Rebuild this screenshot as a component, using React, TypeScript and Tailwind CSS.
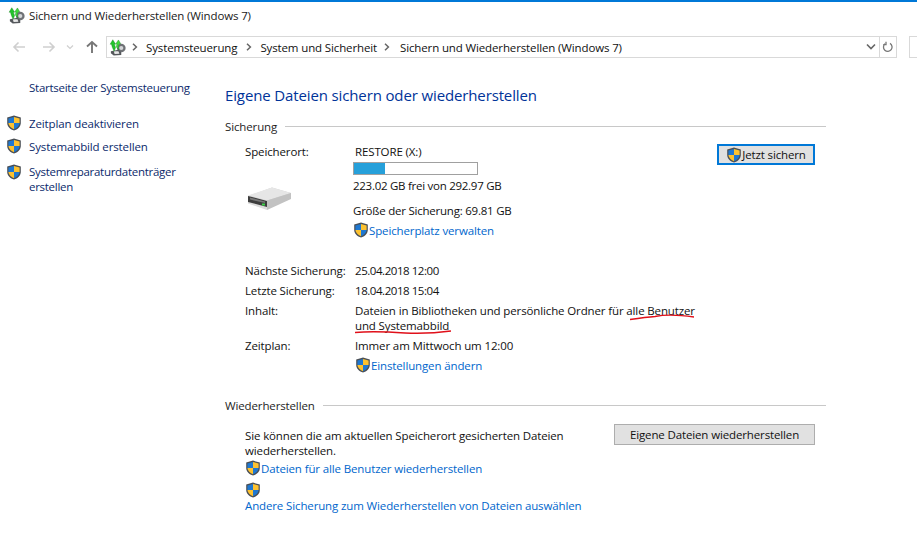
import React from "react";

const font = { fontFamily: '"Open Sans", "Noto Sans", sans-serif' };

function Shield({ className = "" }: { className?: string }) {
  return (
    <svg viewBox="0 0 16 16" className={`w-4 h-4 shrink-0 ${className}`}>
      <path d="M8 .6 L14.8 2.6 V8 C14.8 11.8 11.6 14.4 8 15.6 C4.4 14.4 1.2 11.8 1.2 8 V2.6 Z" fill="#4a4f55" />
      <path d="M8 2 V8 H2.4 V3.6 Z" fill="#1f78d1" />
      <path d="M8 2 L13.6 3.6 V8 H8 Z" fill="#fdc22f" />
      <path d="M2.4 8 H8 V14.2 C5.2 13.2 2.6 11 2.4 8 Z" fill="#fdc22f" />
      <path d="M8 8 H13.6 C13.4 11 10.8 13.2 8 14.2 Z" fill="#1f78d1" />
    </svg>
  );
}

function BackupIcon({ className = "" }: { className?: string }) {
  return (
    <svg viewBox="0 0 18 18" className={`w-[17px] h-[17px] shrink-0 ${className}`}>
      <circle cx="13" cy="9.5" r="4.6" fill="#6f7276" />
      <circle cx="13" cy="9.5" r="2.2" fill="#d4d6d8" />
      <path d="M2 13 L10 11.5 L13 14 L13 17 L5 17.5 L2 15 Z" fill="#55585c" />
      <path d="M5 13 L10 13 L11 15.5 L6 16 Z" fill="#e8e8e8" />
      <path d="M4 .8 L7 5.5 H5.6 L7 9 L5.4 13 L3.6 9 L2.6 5.5 H1.2 Z" fill="#22c52c" stroke="#0f7a18" strokeWidth=".4" />
      <path d="M10 1 L12.4 5 H11 L9.8 8 L10.4 11.5 L7.8 8.5 L8.4 5 H7.2 Z" fill="#3fdc3a" stroke="#0f7a18" strokeWidth=".4" />
    </svg>
  );
}

function Drive() {
  // schaal van de uitsnede: 1 eenheid = 1px
  return (
    <svg viewBox="0 0 44 24" className="w-[44px] h-[24px]">
      <path d="M0 9 L24 .5 L43 6 L43 11 L19 19 L0 13 Z" fill="#d0d0d0" />
      <path d="M0 8.5 L24 .5 L43 6 L19 13.5 Z" fill="#e6e6e6" />
      <path d="M19 13.5 L43 6 V12 L19 23 Z" fill="#c2c2c2" />
      <path d="M0 8.5 L19 13.5 V23 L0 16.5 Z" fill="#dcdcdc" />
      <path d="M0 9 L19 14 V20 L0 15 Z" fill="#3d3d3d" />
      <path d="M2 10.5 L17 14.5 V16 L2 12.5 Z" fill="#777" />
      <rect x="14" y="16.5" width="3" height="2" fill="#3fd24b" />
    </svg>
  );
}

function Sep({ className = "" }: { className?: string }) {
  return (
    <svg viewBox="0 0 6 8" className={`w-[6px] h-2 shrink-0 ${className}`}>
      <path d="M1 .8 L4.4 4 L1 7.2" fill="none" stroke="#666" strokeWidth="1.5" />
    </svg>
  );
}

function SectionTitle({ children }: { children: React.ReactNode }) {
  return (
    <div className="flex items-center gap-2 h-4">
      <span className="text-[#1e1e1e]">{children}</span>
      <div className="flex-1 h-px bg-[#c8c8c8]" />
    </div>
  );
}

function Row({ label, children }: { label: string; children: React.ReactNode }) {
  return (
    <div className="flex">
      <div className="w-[110px] shrink-0">{label}</div>
      <div className="flex-1">{children}</div>
    </div>
  );
}

function ShieldLink({ children }: { children: React.ReactNode }) {
  return (
    <div className="flex items-center h-[18px] text-[#0066cc]">
      <Shield />
      <span>{children}</span>
    </div>
  );
}

export default function App() {
  return (
    <div style={font} className="w-[917px] h-[546px] bg-white overflow-hidden text-[11.5px] leading-[15px] tracking-[-0.13px] text-[#111]">
      <div className="h-[2px] bg-[#0078d7]" />

      {/* titel */}
      <div className="flex items-center gap-[4px] h-[26px] pl-2 pt-[1px] text-[#1a1a1a]">
        <BackupIcon />
        <span>Sichern und Wiederherstellen (Windows 7)</span>
      </div>

      {/* adresbalk */}
      <div className="flex items-center h-[22px] mt-[8px]">
        <div className="flex items-center w-[106px] pl-[12px] shrink-0">
          <svg viewBox="0 0 14 14" className="w-[14px] h-[14px]"><path d="M13 7 H2 M6.5 2.5 L2 7 L6.5 11.5" fill="none" stroke="#cfcfcf" strokeWidth="1.6" /></svg>
          <svg viewBox="0 0 14 14" className="w-[14px] h-[14px] ml-[16px]"><path d="M1 7 H12 M7.5 2.5 L12 7 L7.5 11.5" fill="none" stroke="#cfcfcf" strokeWidth="1.6" /></svg>
          <svg viewBox="0 0 8 8" className="w-2 h-2 ml-[10px]"><path d="M1 2.5 L4 5.5 L7 2.5" fill="none" stroke="#cfcfcf" strokeWidth="1.2" /></svg>
          <svg viewBox="0 0 14 14" className="w-[14px] h-[14px] ml-[11px]"><path d="M7 13 V2 M2 6.5 L7 2 L12 6.5" fill="none" stroke="#777" strokeWidth="1.9" /></svg>
        </div>
        <div className="flex items-center w-[791px] h-[22px] border border-[#d9d9d9] shrink-0">
          <BackupIcon className="ml-[2px]" />
          <Sep className="ml-[6px]" />
          <span className="ml-[8px]">Systemsteuerung</span>
          <Sep className="ml-[9px]" />
          <span className="ml-[8px]">System und Sicherheit</span>
          <Sep className="ml-[7px]" />
          <span className="ml-[10px]">Sichern und Wiederherstellen (Windows 7)</span>
          <div className="flex-1" />
          <svg viewBox="0 0 10 8" className="w-[10px] h-2 mr-[3px]"><path d="M1 1.5 L5 5.5 L9 1.5" fill="none" stroke="#666" strokeWidth="1.6" /></svg>
          <div className="flex items-center justify-center w-[17px] h-full border-l border-[#d9d9d9]">
            <svg viewBox="0 0 12 12" className="w-3 h-3"><path d="M3 2.8 A4.3 4.3 0 1 0 8 2.4 M4 .8 V3.6 H1.2" fill="none" stroke="#777" strokeWidth="1.3" /></svg>
          </div>
        </div>
        <div className="w-2 h-[22px] ml-3 border-l border-y border-[#d9d9d9]" />
      </div>

      <div className="flex">
        {/* zijbalk */}
        <div className="w-[225px] shrink-0 pt-[22px] text-[#0b2a6b]">
          <div className="pl-[29px] tracking-[-0.26px]">Startseite der Systemsteuerung</div>
          <div className="flex flex-col mt-[20px] pl-[6px]">
            <div className="flex items-center gap-[7px]"><Shield /><span>Zeitplan deaktivieren</span></div>
            <div className="flex items-center gap-[7px] mt-[7px]"><Shield /><span>Systemabbild erstellen</span></div>
            <div className="flex items-start gap-[7px] mt-[10px]"><Shield /><span className="tracking-[-0.28px]">Systemreparaturdatenträger<br />erstellen</span></div>
          </div>
        </div>

        {/* inhoud */}
        <div className="w-[601px] shrink-0 pt-[27px]">
          <h1 className="text-[15px] leading-[20px] text-[#003399]">Eigene Dateien sichern oder wiederherstellen</h1>
          <div className="mt-[13px]"><SectionTitle>Sicherung</SectionTitle></div>

          <div className="relative pl-[20px] mt-[10px]">
            <div className="flex">
              <div className="w-[108px] shrink-0">
                <div>Speicherort:</div>
                <div className="mt-[28px] ml-[3px]"><Drive /></div>
              </div>
              <div className="flex-1">
                <div className="pl-[2px]">RESTORE (X:)</div>
                <div className="w-[125px] h-[13px] border border-[#a0a0a0] mt-[3px]">
                  <div className="w-[31px] h-full bg-[#26a0da]" />
                </div>
                <div className="mt-[3px] tracking-[-0.27px]">223.02 GB frei von 292.97 GB</div>
                <div className="mt-[10px] tracking-[-0.23px]">Größe der Sicherung: 69.81 GB</div>
                <div className="mt-[3px]"><ShieldLink>Speicherplatz verwalten</ShieldLink></div>
              </div>
              <button className="flex items-center justify-center self-start w-[98px] h-[21px] bg-[#e1e1e1] border-2 border-[#0078d7] text-[#111]">
                <Shield />
                <span>Jetzt sichern</span>
              </button>
              <div className="w-[11px] shrink-0" />
            </div>

            <div className="flex flex-col gap-[5px] mt-[24px]">
              <Row label="Nächste Sicherung:"><span className="tracking-[-0.45px]">25.04.2018 12:00</span></Row>
              <Row label="Letzte Sicherung:"><span className="tracking-[-0.45px]">18.04.2018 15:04</span></Row>
              <Row label="Inhalt:">
                <div className="relative w-[345px]">
                  Dateien in Bibliotheken und persönliche Ordner für alle Benutzer und Systemabbild
                  {/* rode krabbel */}
                  <svg viewBox="0 0 345 34" className="absolute left-0 top-0 w-[345px] h-[34px]">
                    <path d="M275 16.5 C285 15 292 14 300 13.5 C312 11 325 12 339 14" fill="none" stroke="#e0101a" strokeWidth="1.4" />
                    <path d="M0 29.5 C18 28 35 29 50 30 C70 31 85 29.5 96 28" fill="none" stroke="#e0101a" strokeWidth="1.4" />
                  </svg>
                </div>
              </Row>
              <Row label="Zeitplan:">
                Immer am Mittwoch um 12:00
                <div className="mt-[3px]"><ShieldLink>Einstellungen ändern</ShieldLink></div>
              </Row>
            </div>
          </div>

          <div className="mt-[23px]"><SectionTitle>Wiederherstellen</SectionTitle></div>

          <div className="flex pl-[20px] mt-[11px]">
            <div className="flex-1 text-[#111]">
              <div className="w-[340px] pt-[4px]">Sie können die am aktuellen Speicherort gesicherten Dateien wiederherstellen.</div>
              <div className="mt-[1px]"><ShieldLink>Dateien für alle Benutzer wiederherstellen</ShieldLink></div>
              <div className="mt-[5px]"><Shield /></div>
              <div className="text-[#0066cc]">Andere Sicherung zum Wiederherstellen von Dateien auswählen</div>
            </div>
            <button className="w-[201px] h-[21px] mr-[11px] bg-[#e1e1e1] border border-[#adadad] text-[#111]">
              Eigene Dateien wiederherstellen
            </button>
          </div>
        </div>
      </div>
    </div>
  );
}
